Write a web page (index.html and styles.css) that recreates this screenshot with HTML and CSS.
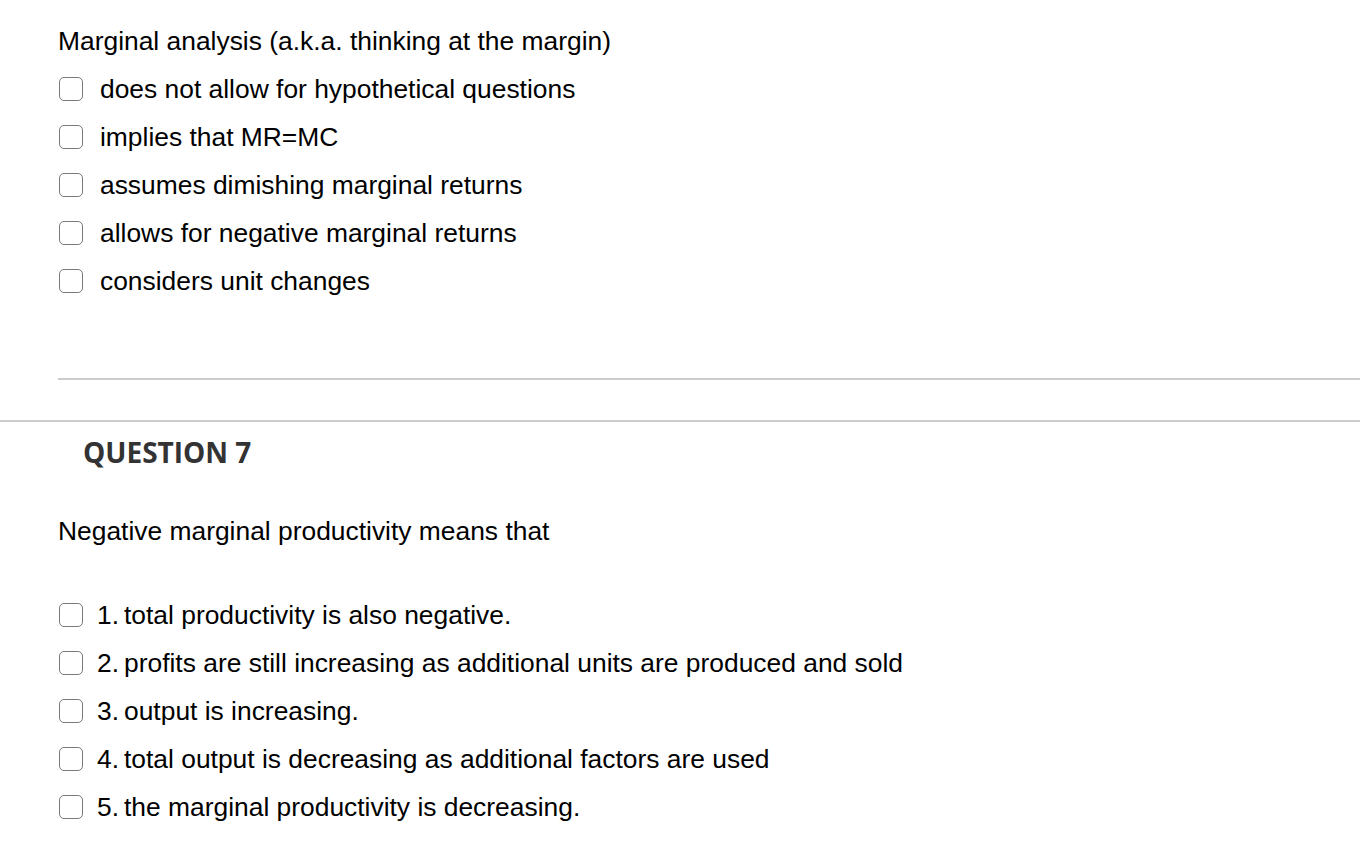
FILE: index.html
```html
<!DOCTYPE html>
<html>
<head>
<meta charset="utf-8">
<link rel="stylesheet" href="styles.css">
</head>
<body>
<div class="q6">
  <p class="prompt">Marginal analysis (a.k.a. thinking at the margin)</p>
  <ul class="opts">
    <li><span class="box"></span><span class="lbl">does not allow for hypothetical questions</span></li>
    <li><span class="box"></span><span class="lbl">implies that MR=MC</span></li>
    <li><span class="box"></span><span class="lbl">assumes dimishing marginal returns</span></li>
    <li><span class="box"></span><span class="lbl">allows for negative marginal returns</span></li>
    <li><span class="box"></span><span class="lbl">considers unit changes</span></li>
  </ul>
  <div class="sep"></div>
</div>
<div class="q7">
  <h2 class="qtitle">QUESTION 7</h2>
  <p class="prompt2">Negative marginal productivity means that</p>
  <ul class="opts opts2">
    <li><span class="box"></span><span class="num">1.</span><span class="lbl">total productivity is also negative.</span></li>
    <li><span class="box"></span><span class="num">2.</span><span class="lbl">profits are still increasing as additional units are produced and sold</span></li>
    <li><span class="box"></span><span class="num">3.</span><span class="lbl">output is increasing.</span></li>
    <li><span class="box"></span><span class="num">4.</span><span class="lbl">total output is decreasing as additional factors are used</span></li>
    <li><span class="box"></span><span class="num">5.</span><span class="lbl">the marginal productivity is decreasing.</span></li>
  </ul>
</div>
</body>
</html>
```
FILE: styles.css
```css
html, body {
  margin: 0;
  padding: 0;
  background: #fff;
}
body {
  font-family: "Liberation Sans", Arial, sans-serif;
  color: #000;
  font-size: 26.4px;
}
.q6 {
  padding: 25px 0 0 58px;
}
.prompt {
  margin: 0;
  height: 32px;
  line-height: 32px;
}
.opts {
  list-style: none;
  margin: 0;
  padding: 0;
}
.q6 .opts {
  margin-top: 8px;
}
.opts li {
  display: flex;
  align-items: center;
  height: 48px;
  line-height: 32px;
}
.box {
  width: 24px;
  height: 24px;
  border: 1.5px solid #7a7a7a;
  border-radius: 5px;
  box-sizing: border-box;
  flex: none;
  margin-left: 1px;
  margin-right: 17px;
}
.sep {
  margin-top: 73px;
  border-top: 2px solid #cccccc;
}
.q7 {
  margin-top: 40px;
  border-top: 2px solid #cccccc;
}
.qtitle {
  margin: 0;
  padding: 14px 0 0 83px;
  font-family: "Open Sans", sans-serif;
  font-weight: 700;
  font-size: 28px;
  line-height: 32px;
  color: #333;
}
.prompt2 {
  margin: 47px 0 0 58px;
  line-height: 32px;
}
.opts2 {
  margin: 44px 0 0 58px;
}
.opts2 .box {
  margin-right: 14px;
}
.num {
  margin-right: 5px;
}
```
